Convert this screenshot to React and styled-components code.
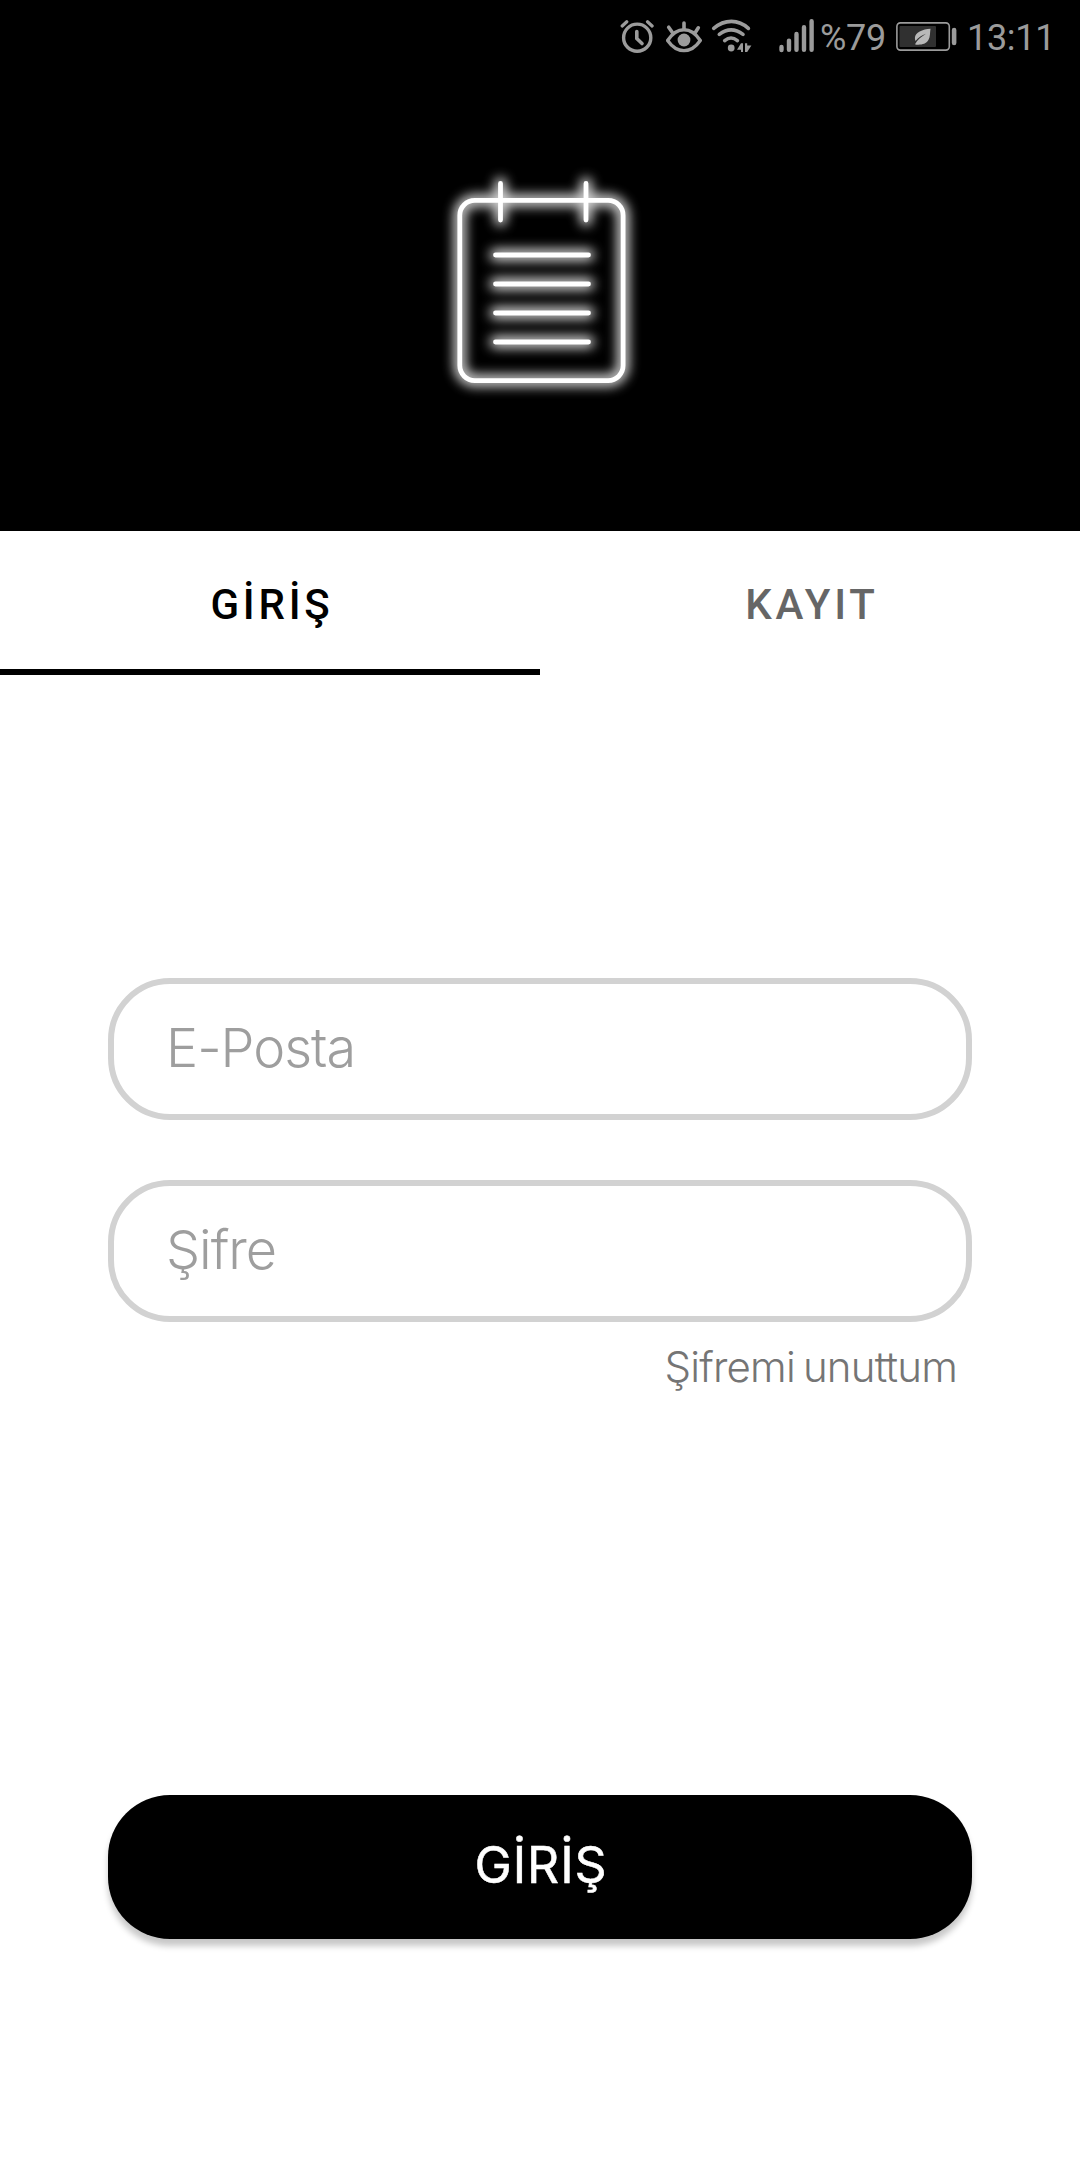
import React, { useState } from "react";
import styled, { createGlobalStyle } from "styled-components";

const GlobalStyle = createGlobalStyle`
  *, *::before, *::after { box-sizing: border-box; }
  body { margin: 0; background: #fff; }
`;

const Screen = styled.div`
  display: flex;
  flex-direction: column;
  width: 1080px;
  height: 2160px;
  overflow: hidden;
  background: #fff;
  font-family: Inter, "Liberation Sans", sans-serif;
`;

const Header = styled.header`
  display: flex;
  flex-direction: column;
  height: 531px;
  background: #000;
`;

const StatusBar = styled.div`
  display: flex;
  align-items: center;
  justify-content: flex-end;
  height: 72px;
  padding-right: 25px;
  color: #9b9b9b;
`;

const StatusIcon = styled.svg`
  display: block;
  flex: none;
  width: ${(p) => p.$width}px;
  height: 72px;
  margin-right: ${(p) => p.$gap}px;
  fill: none;
  stroke: currentColor;
  stroke-linecap: round;
`;

const StatusText = styled.span`
  flex: none;
  width: ${(p) => p.$width}px;
  font: 400 36px/72px Roboto, sans-serif;
  letter-spacing: ${(p) => p.$spacing}px;
  white-space: nowrap;
  padding-top: 3px;
`;

const LogoArea = styled.div`
  display: flex;
  justify-content: center;
  padding: 88px 0 0 10px;
`;

const Logo = styled.svg`
  display: block;
  width: 230px;
  height: 250px;
`;

const Tabs = styled.nav`
  display: flex;
  height: 144px;
`;

const Tab = styled.button`
  flex: 1;
  padding: 8px 0 0 4px;
  border: 0;
  border-bottom: 6px solid ${(p) => (p.$active ? "#000" : "transparent")};
  background: transparent;
  color: ${(p) => (p.$active ? "#000" : "#666")};
  font: 500 42px/49px Roboto, sans-serif;
  letter-spacing: 3.75px;
`;

const Form = styled.form`
  display: flex;
  flex-direction: column;
  padding: 303px 108px 0;
`;

const Field = styled.input`
  height: 142px;
  padding: 0 52px 4px;
  margin-bottom: ${(p) => p.$gap}px;
  border: 6px solid #d2d2d2;
  border-radius: 62px;
  outline: none;
  background: transparent;
  color: #222;
  font: 300 54px/64px Inter, sans-serif;
  letter-spacing: -1px;

  &::placeholder { color: #9e9e9e; opacity: 1; }
`;

const ForgotLink = styled.a`
  align-self: flex-end;
  margin-right: 15px;
  color: #757575;
  font: 300 42px/52px Inter, sans-serif;
  letter-spacing: -0.8px;
  word-spacing: -3px;
  text-decoration: none;
`;

const SubmitButton = styled.button`
  height: 144px;
  margin-top: 402px;
  padding: 0 0 5px 2px;
  border: 0;
  border-radius: 62px;
  background: #000;
  color: #fff;
  font: 400 50px/60px Inter, sans-serif;
  letter-spacing: 0.9px;
  -webkit-text-stroke: 0.5px #fff;
  box-shadow: 0 7px 6px rgba(0, 0, 0, 0.22);
`;

const AlarmIcon = () => (
  <StatusIcon $width={34} $gap={12} viewBox="620.5 0 34 72">
    <circle cx="637.7" cy="37.7" r="13.6" strokeWidth="3.4" />
    <path d="M637.3 31.5v7l5.2 5" strokeWidth="3.6" />
    <path d="M622.7 26l4.6-4.2M652.6 26l-4.6-4.2" strokeWidth="3.2" />
  </StatusIcon>
);

const EyeIcon = () => (
  <StatusIcon $width={36} $gap={9} viewBox="666 0 36 72" strokeLinejoin="round">
    <path d="M667.6 40.5C677 26.2 691 26.2 700.3 40.5C691 54 677 54 667.6 40.5Z" strokeWidth="3.4" />
    <circle cx="684" cy="40" r="6.4" fill="currentColor" stroke="none" />
    <path d="M684 23v6M668.7 27.2l3.5 5M698.3 27.8l-3 4.6" strokeWidth="3.6" />
  </StatusIcon>
);

const WifiIcon = () => (
  <StatusIcon $width={41} $gap={27} viewBox="711 0 41 72">
    <path d="M713.7 28.4C724.5 19 738.5 19 748.4 28.4M719.3 34.4Q731 25.2 743 34.4M724.7 40.6Q731 35.4 737.4 40.6" strokeWidth="3.6" />
    <circle cx="731.2" cy="48" r="3.4" fill="currentColor" stroke="none" />
    <path d="M741 43.2h2v8.8h-2v-2.2h-4zM745 43.2h2.2v2.2h4.2l-4.2 6.6h-2.2z" fill="currentColor" stroke="none" />
  </StatusIcon>
);

const SignalIcon = () => (
  <StatusIcon $width={35} $gap={6} viewBox="779 0 35 72">
    <path d="M781.5 47v3M789 40.6v9.2M796.5 34v15.8M804 27.2v22.6M811.6 21.2v28.6" strokeWidth="4.4" />
  </StatusIcon>
);

const BatteryIcon = () => (
  <StatusIcon $width={61} $gap={10} viewBox="896 0 61 72">
    <rect x="896.9" y="22.9" width="52.4" height="27.2" rx="3.5" strokeWidth="1.6" />
    <rect x="899.5" y="26" width="36.5" height="21" rx="1" fill="#303030" stroke="none" />
    <path d="M930.5 28.8c-8 .5-15.5 3.5-15.6 9.3c0 1.2.2 2.1.6 2.9c3-3.6 6.6-5.7 10.4-7.2c-4.2 2.7-8.6 6-10.9 10.4l1.4.5c5.1.4 9.6-.6 12-4.6c2-3.3 1.5-7.8 2.1-11.3z" fill="#b8b8b8" stroke="none" />
    <path d="M954.1 30v13" strokeWidth="4.6" />
  </StatusIcon>
);

const NoteShape = () => (
  <>
    <rect x="459.8" y="200.4" width="163.3" height="180.2" rx="15" />
    <path d="M500.5 183.5v36.5M586 183.5v36.5M495.5 255h93M495.5 284h93M495.5 313h93M495.5 342h93" />
  </>
);

const NoteLogo = () => (
  <Logo viewBox="430 160 230 250" fill="none" stroke="#fff" strokeLinecap="round" strokeWidth="4.8">
    <defs>
      <filter id="glow" x="-30%" y="-30%" width="160%" height="160%" colorInterpolationFilters="sRGB">
        <feGaussianBlur stdDeviation="6" />
      </filter>
    </defs>
    <g filter="url(#glow)" strokeWidth="12" opacity="0.85"><NoteShape /></g>
    <NoteShape />
  </Logo>
);

export default function App() {
  const [tab, setTab] = useState("login");
  return (
    <Screen lang="tr">
      <GlobalStyle />
      <Header>
        <StatusBar>
          <AlarmIcon />
          <EyeIcon />
          <WifiIcon />
          <SignalIcon />
          <StatusText $width={76} $spacing={-0.3}>%79</StatusText>
          <BatteryIcon />
          <StatusText $width={88} $spacing={-0.3}>13:11</StatusText>
        </StatusBar>
        <LogoArea><NoteLogo /></LogoArea>
      </Header>
      <Tabs>
        <Tab type="button" $active={tab === "login"} onClick={() => setTab("login")}>GİRİŞ</Tab>
        <Tab type="button" $active={tab === "register"} onClick={() => setTab("register")}>KAYIT</Tab>
      </Tabs>
      <Form onSubmit={(e) => e.preventDefault()}>
        <Field type="email" placeholder="E-Posta" $gap={60} />
        <Field type="password" placeholder="Şifre" $gap={19} />
        <ForgotLink>Şifremi unuttum</ForgotLink>
        <SubmitButton type="submit">GİRİŞ</SubmitButton>
      </Form>
    </Screen>
  );
}
